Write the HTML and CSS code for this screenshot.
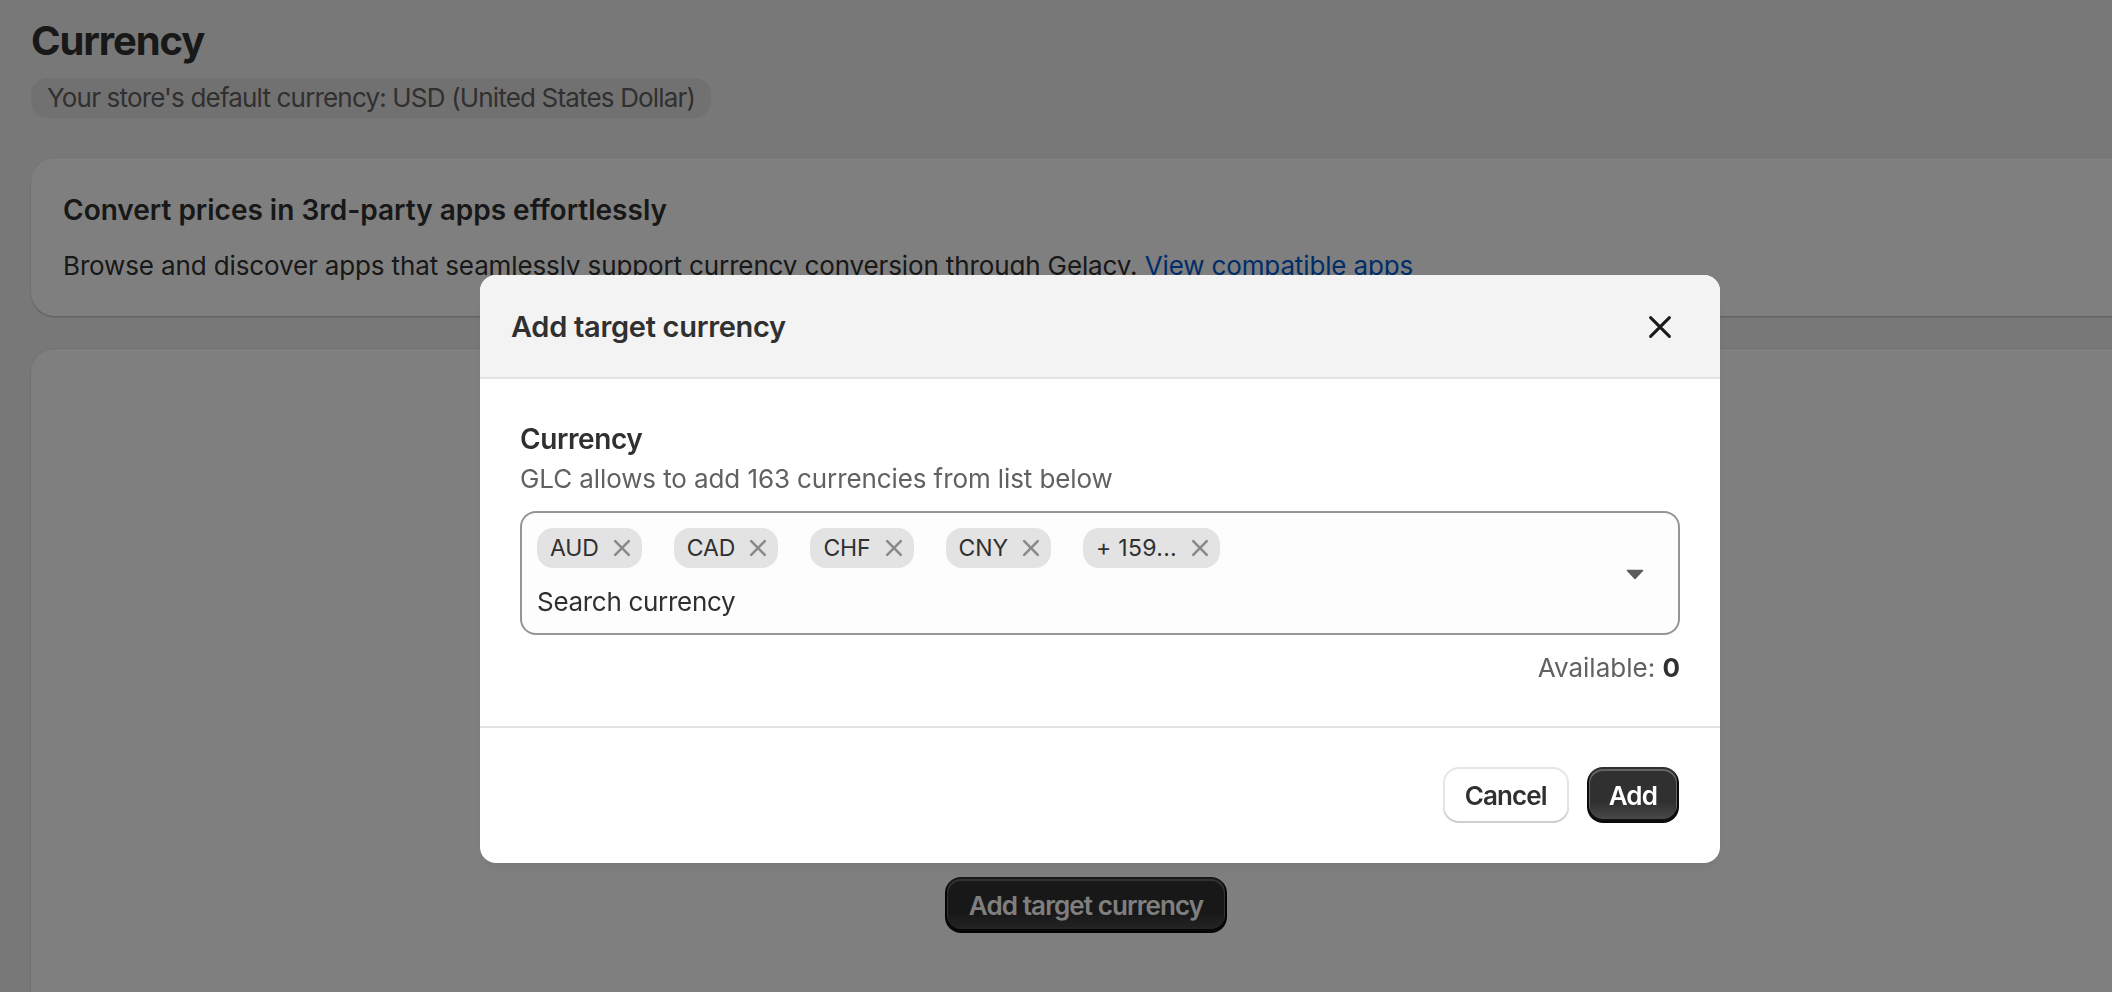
FILE: index.html
```html
<!DOCTYPE html>
<html lang="en">
<head>
  <meta charset="UTF-8" />
  <meta name="viewport" content="width=device-width, initial-scale=1.0"/>
  <title>Gelacy | Currency</title>
  <link rel="stylesheet" href="styles.css">
</head>
<body>
<div class="page">
  <h1 class="page-title">Currency</h1>
  <span class="default-badge">Your store's default currency: USD (United States Dollar)</span>

  <section class="card apps-card">
    <h3>Convert prices in 3rd-party apps effortlessly</h3>
    <p>Browse and discover apps that seamlessly support currency conversion through Gelacy. <a href="#">View compatible apps</a></p>
  </section>

  <section class="card targets-card">
    <div class="empty-state">
      <button class="btn btn-primary">Add target currency</button>
    </div>
  </section>
</div>

<!-- add currency modal -->
<div class="backdrop">
  <div class="modal">
    <div class="modal-header">
      <h2>Add target currency</h2>
      <button class="close-btn" aria-label="Close">
        <svg width="40" height="40" viewBox="0 0 20 20"><path d="M5.3 5.3l9.4 9.4M14.7 5.3l-9.4 9.4" stroke="#1a1a1a" stroke-width="1.5" stroke-linecap="round" fill="none"/></svg>
      </button>
    </div>

    <div class="modal-body">
      <div class="field-label">Currency</div>
      <div class="field-help">GLC allows to add 163 currencies from list below</div>

      <div class="combo">
        <div class="combo-main">
          <div class="tags">
            <span class="tag">AUD<button class="tag-remove"><svg width="40" height="40" viewBox="0 0 20 20"><path d="M6.6 6.6l6.8 6.8M13.4 6.6l-6.8 6.8" stroke="#8a8a8a" stroke-width="1.3" stroke-linecap="round" fill="none"/></svg></button></span>
            <span class="tag">CAD<button class="tag-remove"><svg width="40" height="40" viewBox="0 0 20 20"><path d="M6.6 6.6l6.8 6.8M13.4 6.6l-6.8 6.8" stroke="#8a8a8a" stroke-width="1.3" stroke-linecap="round" fill="none"/></svg></button></span>
            <span class="tag">CHF<button class="tag-remove"><svg width="40" height="40" viewBox="0 0 20 20"><path d="M6.6 6.6l6.8 6.8M13.4 6.6l-6.8 6.8" stroke="#8a8a8a" stroke-width="1.3" stroke-linecap="round" fill="none"/></svg></button></span>
            <span class="tag">CNY<button class="tag-remove"><svg width="40" height="40" viewBox="0 0 20 20"><path d="M6.6 6.6l6.8 6.8M13.4 6.6l-6.8 6.8" stroke="#8a8a8a" stroke-width="1.3" stroke-linecap="round" fill="none"/></svg></button></span>
            <span class="tag tag-more">+ 159...<button class="tag-remove"><svg width="40" height="40" viewBox="0 0 20 20"><path d="M6.6 6.6l6.8 6.8M13.4 6.6l-6.8 6.8" stroke="#8a8a8a" stroke-width="1.3" stroke-linecap="round" fill="none"/></svg></button></span>
          </div>
          <input class="combo-search" type="text" placeholder="Search currency">
        </div>
        <svg class="caret" width="18" height="11" viewBox="0 0 18 11"><path d="M1.5 1.5h15L9 9.5z" fill="#5c5c5c" stroke="#5c5c5c" stroke-width="1.5" stroke-linejoin="round"/></svg>
      </div>

      <div class="available">Available: <b>0</b></div>
    </div>

    <div class="modal-footer">
      <button class="btn btn-secondary">Cancel</button>
      <button class="btn btn-primary">Add</button>
    </div>
  </div>
</div>
</body>
</html>
```

FILE: styles.css
```css
* { box-sizing: border-box; }

html, body {
  margin: 0;
  height: 100%;
  overflow: hidden;
  background: #f1f1f1;
  font-family: "Inter", "Liberation Sans", sans-serif;
  color: #303030;
}

.page {
  display: flex;
  flex-direction: column;
  align-items: flex-start;
  padding: 17px 0 0 31px;
}

.page-title {
  margin: 0;
  font-size: 40px;
  line-height: 48px;
  font-weight: 700;
  letter-spacing: -1.1px;
}

.default-badge {
  margin-top: 13px;
  padding: 4px 16px;
  border-radius: 16px;
  background: #e3e3e3;
  color: #616161;
  font-size: 26px;
  line-height: 32px;
  letter-spacing: -0.83px;
}

/* cards */
.card {
  width: 2110px;
  background: #fff;
  border-radius: 24px;
  box-shadow: 0 0 0 1px rgba(0, 0, 0, 0.05), 0 2px 0 rgba(26, 26, 26, 0.12);
}

.apps-card {
  margin-top: 40px;
  padding: 32px;
}

.apps-card h3 {
  margin: 0;
  font-size: 28px;
  line-height: 40px;
  font-weight: 600;
  letter-spacing: 0;
}

.apps-card p {
  margin: 18px 0 0;
  font-size: 26px;
  line-height: 36px;
  letter-spacing: -0.13px;
}

.apps-card a {
  color: #005bd3;
  text-decoration: none;
}

.targets-card {
  margin-top: 33px;
  height: 700px;
}

.empty-state {
  padding-top: 528px;
  text-align: center;
}

/* buttons */
.btn {
  height: 56px;
  padding: 0 22px;
  border: 0;
  border-radius: 16px;
  font-family: inherit;
  font-size: 26px;
  font-weight: 600;
  letter-spacing: -0.9px;
  cursor: pointer;
}

.btn-primary {
  color: #fff;
  background: linear-gradient(180deg, rgba(48, 48, 48, 0) 63%, rgba(255, 255, 255, 0.15) 100%), #303030;
  box-shadow: inset 0 -2px 0 2px rgba(0, 0, 0, 0.8), inset 0 0 0 2px #303030, inset 0 1px 0 3px rgba(255, 255, 255, 0.25);
}

.empty-state .btn {
  padding: 0 24px;
}

.btn-secondary {
  color: #303030;
  background: #fff;
  box-shadow: inset 0 -2px 0 0 #cfcfcf, inset 0 0 0 2px rgba(0, 0, 0, 0.1), inset 0 1px 0 3px #fff;
}

/* modal */
.backdrop {
  position: fixed;
  inset: 0;
  background: rgba(0, 0, 0, 0.5);
  display: flex;
  justify-content: center;
  align-items: flex-start;
  padding: 275px 0 0 88px;
}

.modal {
  width: 1240px;
  background: #fff;
  border-radius: 16px;
  overflow: hidden;
  box-shadow: 0 8px 16px -8px rgba(26, 26, 26, 0.12);
}

.modal-header {
  height: 104px;
  display: flex;
  align-items: center;
  justify-content: space-between;
  padding: 2px 40px 0 31px;
  background: #f3f3f3;
  border-bottom: 2px solid #e3e3e3;
}

.modal-header h2 {
  margin: 0;
  font-size: 29px;
  line-height: 40px;
  font-weight: 600;
  letter-spacing: -0.3px;
}

.close-btn {
  width: 40px;
  height: 40px;
  padding: 0;
  border: 0;
  background: none;
  display: flex;
}

.modal-body {
  padding: 40px 40px 41px;
}

.field-label {
  font-size: 28px;
  line-height: 40px;
  font-weight: 600;
  letter-spacing: -0.4px;
}

.field-help {
  margin-top: 4px;
  font-size: 26px;
  line-height: 32px;
  color: #616161;
  letter-spacing: -0.1px;
}

.combo {
  margin-top: 16px;
  display: flex;
  align-items: center;
  padding: 15px 34px 12px 15px;
  border: 2px solid #959595;
  border-radius: 16px;
  background: #fdfdfd;
}

.combo-main {
  flex: 1;
}

.tags {
  display: flex;
  flex-wrap: wrap;
  gap: 32px;
}

.tag {
  display: inline-flex;
  align-items: center;
  height: 40px;
  padding-left: 13px;
  border-radius: 16px;
  background: #e3e3e3;
  font-size: 23px;
  line-height: 40px;
  letter-spacing: -0.1px;
}

.tag-more {
  letter-spacing: 0.3px;
}

.tag-remove {
  width: 40px;
  height: 40px;
  margin-left: 3px;
  padding: 0;
  border: 0;
  background: none;
  display: flex;
}

.combo-search {
  display: block;
  width: 100%;
  margin-top: 13px;
  height: 40px;
  padding: 0;
  border: 0;
  outline: none;
  background: transparent;
  font-family: inherit;
  font-size: 26px;
  letter-spacing: -0.3px;
  color: #303030;
}

.combo-search::placeholder {
  color: #303030;
}

.caret {
  flex-shrink: 0;
}

.available {
  margin-top: 16px;
  text-align: right;
  font-size: 26px;
  line-height: 34px;
  color: #616161;
  letter-spacing: 0;
}

.available b {
  color: #303030;
  font-weight: 700;
}

.modal-footer {
  display: flex;
  justify-content: flex-end;
  gap: 18px;
  padding: 39px 41px 40px;
  border-top: 2px solid #e3e3e3;
}
```
